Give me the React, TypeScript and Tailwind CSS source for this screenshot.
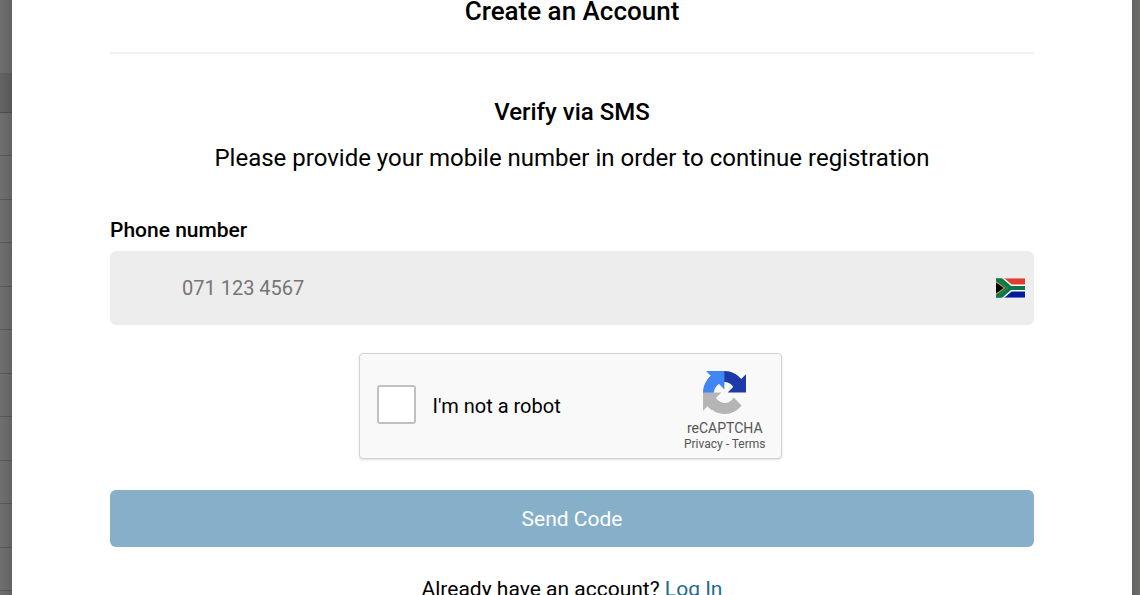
import { useState } from "react";

const rows = Array.from({ length: 12 }, (_, i) => i);

function FlagZA() {
    return (
        <svg viewBox="0 0 30 20" className="w-[29px] h-5 shrink-0" role="img" aria-label="South Africa">
            <defs>
                <clipPath id="za-flag">
                    <path d="M0 0h30v20H0z" />
                </clipPath>
            </defs>
            <g clipPath="url(#za-flag)">
                <path d="M0 0h30v10H0z" fill="#e03c31" />
                <path d="M0 10h30v10H0z" fill="#001c9a" />
                <path d="M1 -2 L15 10 L1 22 M15 10 H30" stroke="#fff" strokeWidth="7" fill="none" />
                <path d="M0 -1 L12 10 L0 21z" fill="#0b7749" />
                <path d="M1 -2 L15 10 L1 22 M15 10 H30" stroke="#0b7749" strokeWidth="4" fill="none" />
                <path d="M0 2.8 L9.8 10 L0 17.2z" fill="#b99a2c" />
                <path d="M0 4.4 L7.8 10 L0 15.6z" fill="#000" />
            </g>
        </svg>
    );
}

function RecaptchaLogo() {
    return (
        <svg viewBox="0 0 64 64" className="size-[43px]" aria-hidden="true">
            <path
                fill="#1c3aa9"
                d="M64 31.955l-.033-1.37V4.687l-7.16 7.16C50.948 4.674 42.033.093 32.05.093c-10.4 0-19.622 4.96-25.458 12.64l11.736 11.86a15.55 15.55 0 0 1 4.754-5.334c2.05-1.6 4.952-2.906 8.968-2.906.485 0 .86.057 1.135.163 4.976.393 9.288 3.14 11.828 7.124l-8.307 8.307L64 31.953"
            />
            <path
                fill="#4285f4"
                d="M31.862.094l-1.37.033H4.594l7.16 7.16C4.58 13.147 0 22.06 0 32.046c0 10.4 4.96 19.622 12.64 25.458L24.5 45.768a15.55 15.55 0 0 1-5.334-4.754c-1.6-2.05-2.906-4.952-2.906-8.968 0-.485.057-.86.163-1.135.393-4.976 3.14-9.288 7.124-11.828l8.307 8.307L31.86.095"
            />
            <path
                fill="#b5b5b5"
                d="M.001 32.045l.033 1.37v25.898l7.16-7.16c5.86 7.173 14.774 11.754 24.76 11.754 10.4 0 19.622-4.96 25.458-12.64l-11.736-11.86a15.55 15.55 0 0 1-4.754 5.334c-2.05 1.6-4.952 2.906-8.968 2.906-.485 0-.86-.057-1.135-.163-4.976-.393-9.288-3.14-11.828-7.124l8.307-8.307c-10.522.04-22.4.066-27.295-.005"
            />
        </svg>
    );
}

export default function App() {
    const [phone, setPhone] = useState("");
    const [checked, setChecked] = useState(false);

    return (
        <div className="flex h-screen overflow-hidden font-['Roboto',sans-serif] text-black">
            <div className="w-3 shrink-0 bg-linear-to-r from-[#707070] to-[#626262]">
                <div className="h-[73px]" />
                <div className="h-10 bg-black/10 border-b border-black/20" />
                {rows.map((row) => (
                    <div key={row} className="odd:h-[43px] even:h-11 border-b border-black/20" />
                ))}
            </div>

            <main className="flex-1 bg-white px-[98px]">
                <h1 className="pb-[30px] border-b-2 border-[#f2f2f2] text-center text-[26px] leading-[22px] font-medium">
                    Create an Account
                </h1>

                <form onSubmit={(e) => e.preventDefault()}>
                    <h2 className="mt-[42px] text-center text-2xl font-medium">Verify via SMS</h2>
                    <p className="mt-[14px] text-center text-2xl">
                        Please provide your mobile number in order to continue registration
                    </p>

                    <label htmlFor="phone" className="block mt-11 text-[21px] leading-6 font-medium">
                        Phone number
                    </label>
                    <div className="flex items-center mt-[9px] h-[74px] pr-[9px] rounded-md bg-[#ededed]">
                        <input
                            id="phone"
                            type="tel"
                            value={phone}
                            onChange={(e) => setPhone(e.target.value)}
                            placeholder="071 123 4567"
                            className="flex-1 h-full pl-[72px] bg-transparent text-xl outline-none placeholder:text-[#757575]"
                        />
                        <FlagZA />
                    </div>

                    <div className="pr-1">
                        <div className="flex items-center w-[423px] h-[106px] mx-auto mt-7 pl-[17px] pr-[15px] border border-[#d3d3d3] rounded-[4px] bg-[#f9f9f9] shadow-sm">
                            <input
                                id="robot"
                                type="checkbox"
                                checked={checked}
                                onChange={(e) => setChecked(e.target.checked)}
                                className="appearance-none w-[39px] h-[39px] mb-1 border-2 border-[#c1c1c1] rounded-[3px] bg-white checked:bg-[#4285f4]"
                            />
                            <label htmlFor="robot" className="ml-[17px] text-xl">
                                I'm not a robot
                            </label>
                            <div className="flex flex-col items-center ml-auto pt-2 text-[#555]">
                                <RecaptchaLogo />
                                <span className="mt-1 text-sm">reCAPTCHA</span>
                                <span className="text-xs leading-3">
                                    <a href="#privacy">Privacy</a> - <a href="#terms">Terms</a>
                                </span>
                            </div>
                        </div>
                    </div>

                    <button
                        type="submit"
                        className="block w-full h-[57px] mt-[31px] pt-[3px] rounded-md bg-[#86afc9] text-[21px] text-white"
                    >
                        Send Code
                    </button>
                </form>

                <p className="mt-7 text-center text-[21px] leading-7">
                    Already have an account?{" "}
                    <a href="#login" className="text-[#1f6a94]">
                        Log In
                    </a>
                </p>
            </main>

            <div className="w-2 shrink-0 bg-linear-to-r from-[#626360] to-[#6d6e6a]" />
        </div>
    );
}
